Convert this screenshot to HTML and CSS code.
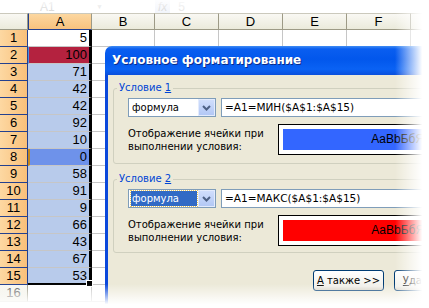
FILE: index.html
```html
<!DOCTYPE html>
<html>

<head>
    <title>Условное форматирование</title>

    <link rel="stylesheet" href="styles.css">
</head>

<body>
    <div class="screen">
        <!-- formula bar, mostly faded out -->
        <div class="formula-bar">
            <div class="name-box">A1</div>
            <span class="name-arrow">&#9660;</span>
            <span class="fx">fx</span>
            <span class="fx-value">5</span>
        </div>

        <div class="sheet">
            <div class="corner"></div>
            <div class="col-head active">A</div>
            <div class="col-head">B</div>
            <div class="col-head">C</div>
            <div class="col-head">D</div>
            <div class="col-head">E</div>
            <div class="col-head">F</div>
            <div class="col-head"></div>

            <div class="row-head sel">1</div><div class="cell a first">5</div><div class="cell"></div><div class="cell"></div><div class="cell"></div><div class="cell"></div><div class="cell"></div><div class="cell"></div>
            <div class="row-head sel">2</div><div class="cell a max">100</div><div class="cell"></div><div class="cell"></div><div class="cell"></div><div class="cell"></div><div class="cell"></div><div class="cell"></div>
            <div class="row-head sel">3</div><div class="cell a">71</div><div class="cell"></div><div class="cell"></div><div class="cell"></div><div class="cell"></div><div class="cell"></div><div class="cell"></div>
            <div class="row-head sel">4</div><div class="cell a">42</div><div class="cell"></div><div class="cell"></div><div class="cell"></div><div class="cell"></div><div class="cell"></div><div class="cell"></div>
            <div class="row-head sel">5</div><div class="cell a">42</div><div class="cell"></div><div class="cell"></div><div class="cell"></div><div class="cell"></div><div class="cell"></div><div class="cell"></div>
            <div class="row-head sel">6</div><div class="cell a">92</div><div class="cell"></div><div class="cell"></div><div class="cell"></div><div class="cell"></div><div class="cell"></div><div class="cell"></div>
            <div class="row-head sel">7</div><div class="cell a">10</div><div class="cell"></div><div class="cell"></div><div class="cell"></div><div class="cell"></div><div class="cell"></div><div class="cell"></div>
            <div class="row-head sel">8</div><div class="cell a min">0</div><div class="cell"></div><div class="cell"></div><div class="cell"></div><div class="cell"></div><div class="cell"></div><div class="cell"></div>
            <div class="row-head sel">9</div><div class="cell a">58</div><div class="cell"></div><div class="cell"></div><div class="cell"></div><div class="cell"></div><div class="cell"></div><div class="cell"></div>
            <div class="row-head sel">10</div><div class="cell a">91</div><div class="cell"></div><div class="cell"></div><div class="cell"></div><div class="cell"></div><div class="cell"></div><div class="cell"></div>
            <div class="row-head sel">11</div><div class="cell a">9</div><div class="cell"></div><div class="cell"></div><div class="cell"></div><div class="cell"></div><div class="cell"></div><div class="cell"></div>
            <div class="row-head sel">12</div><div class="cell a">66</div><div class="cell"></div><div class="cell"></div><div class="cell"></div><div class="cell"></div><div class="cell"></div><div class="cell"></div>
            <div class="row-head sel">13</div><div class="cell a">43</div><div class="cell"></div><div class="cell"></div><div class="cell"></div><div class="cell"></div><div class="cell"></div><div class="cell"></div>
            <div class="row-head sel">14</div><div class="cell a">67</div><div class="cell"></div><div class="cell"></div><div class="cell"></div><div class="cell"></div><div class="cell"></div><div class="cell"></div>
            <div class="row-head sel">15</div><div class="cell a last">53<span class="fill-handle"></span></div><div class="cell"></div><div class="cell"></div><div class="cell"></div><div class="cell"></div><div class="cell"></div><div class="cell"></div>
            <div class="row-head">16</div><div class="cell"></div><div class="cell"></div><div class="cell"></div><div class="cell"></div><div class="cell"></div><div class="cell"></div><div class="cell"></div>
        </div>

        <div class="dialog">
            <div class="title-bar">Условное форматирование</div>
            <div class="dialog-body">

                <div class="group">
                    <span class="group-title">Условие <u>1</u></span>
                    <div class="cond-row">
                        <div class="combo">
                            <span class="combo-text">формула</span>
                            <span class="combo-btn">
                                <svg width="9" height="6" viewBox="0 0 9 6"><path d="M1 1 L4.5 4.5 L8 1" fill="none" stroke="#4d6185" stroke-width="2"/></svg>
                            </span>
                        </div>
                        <div class="formula">=А1=МИН($А$1:$А$15)</div>
                    </div>
                    <div class="format-row">
                        <div class="format-label">Отображение ячейки при выполнении условия:</div>
                        <div class="preview">
                            <div class="preview-fill blue">AaBbБбЯя</div>
                        </div>
                    </div>
                </div>

                <div class="group second">
                    <span class="group-title">Условие <u>2</u></span>
                    <div class="cond-row">
                        <div class="combo">
                            <span class="combo-text focused">формула</span>
                            <span class="combo-btn">
                                <svg width="9" height="6" viewBox="0 0 9 6"><path d="M1 1 L4.5 4.5 L8 1" fill="none" stroke="#4d6185" stroke-width="2"/></svg>
                            </span>
                        </div>
                        <div class="formula">=А1=МАКС($А$1:$А$15)</div>
                    </div>
                    <div class="format-row">
                        <div class="format-label">Отображение ячейки при выполнении условия:</div>
                        <div class="preview">
                            <div class="preview-fill red">AaBbБбЯя</div>
                        </div>
                    </div>
                </div>

                <div class="buttons">
                    <button class="btn"><u>А</u> также &gt;&gt;</button>
                    <button class="btn"><u>У</u>далить...</button>
                    <button class="btn">ОК</button>
                </div>
            </div>
        </div>

        <!-- soft white fades round the edges of the picture -->
        <div class="fade-top"></div>
        <div class="fade-right"></div>
        <div class="fade-bottom"></div>
    </div>
</body>

</html>
```

FILE: styles.css
```css
body {
    margin: 0;
    padding: 0;
    background-color: #fff;
    font-family: "Liberation Sans", Arial, sans-serif;
}

.screen {
    position: relative;
    width: 429px;
    height: 308px;
    overflow: hidden;
    background-color: #fff;
}

/* formula bar */
.formula-bar {
    height: 13px;
    display: flex;
    align-items: center;
    font-size: 12px;
    color: #d2d2d2;
}

.name-box {
    width: 92px;
    padding-left: 40px;
    box-sizing: border-box;
}

.name-arrow {
    font-size: 7px;
    color: #e0e0e0;
    margin-left: 4px;
}

.fx {
    margin-left: 52px;
    padding: 0 3px;
    font-style: italic;
    background-color: #f1f4fb;
}

.fx-value {
    margin-left: 8px;
    color: #e2e2e2;
}

/* sheet grid */
.sheet {
    display: grid;
    grid-template-columns: 28px 64px 63px 64px 64px 64px 64px 64px;
    grid-auto-rows: 17px;
    font-size: 13px;
    color: #000;
}

.corner,
.col-head {
    box-sizing: border-box;
    background: linear-gradient(#f9f8f3, #ebeadb);
    border-top: 1px solid #c9c7ba;
    border-right: 1px solid #9d9a86;
    border-bottom: 1px solid #9d9a86;
    text-align: center;
    line-height: 15px;
}

.col-head.active {
    background: linear-gradient(#fcd7a0, #f8c27e);
    border-left: 1px solid #23408f;
    border-bottom: 1px solid #23408f;
}

.row-head {
    box-sizing: border-box;
    background: linear-gradient(#f9f8f3, #ebeadb);
    border-right: 1px solid #9d9a86;
    border-bottom: 1px solid #c9c7ba;
    text-align: center;
    line-height: 16px;
    color: #555;
}

.row-head.sel {
    background: linear-gradient(to right, #fdd8a2, #f9c07a);
    border-right: 1px solid #23408f;
    border-bottom: 1px solid #23408f;
    color: #000;
}

.cell {
    box-sizing: border-box;
    border-right: 1px solid #c6c6c6;
    border-bottom: 1px solid #c6c6c6;
}

.cell.a {
    position: relative;
    background-color: #b8cbeb;
    border-right: 3px solid #000;
    text-align: right;
    padding-right: 2px;
    line-height: 16px;
}

.cell.first {
    background-color: #fff;
}

.cell.max {
    background-color: #b4223f;
    border-left: 1px solid #4a8fe0;
}

.cell.min {
    background-color: #6e92ea;
    border-left: 2px solid #c2861f;
}

.cell.last {
    border-bottom: 2px solid #000;
}

.fill-handle {
    position: absolute;
    right: -4px;
    bottom: -4px;
    width: 5px;
    height: 5px;
    background-color: #000;
    border: 1px solid #fff;
}

/* dialog window */
.dialog {
    position: absolute;
    left: 105px;
    top: 46px;
    width: 520px;
    font-family: "DejaVu Sans", Tahoma, sans-serif;
    font-size: 10px;
    color: #000;
}

.title-bar {
    height: 29px;
    line-height: 29px;
    padding-left: 7px;
    border-radius: 7px 7px 0 0;
    background: linear-gradient(#3f8cf3 0, #0a5ef0 3px, #0257ec 45%, #0a62f4 80%, #0a4fdc 100%);
    color: #fff;
    font-weight: bold;
    font-size: 12px;
    text-shadow: 1px 1px #0b2b8a;
}

.dialog-body {
    background-color: #ece9d8;
    border-left: 3px solid #0a48db;
    padding: 13px 0 40px 5px;
}

.group {
    position: relative;
    width: 470px;
    border: 1px solid #d0d0bf;
    border-radius: 3px;
    padding: 9px 14px 8px;
}

.group.second {
    margin-top: 15px;
    padding-bottom: 6px;
}

.group-title {
    position: absolute;
    top: -8px;
    left: 3px;
    padding: 0 2px;
    background-color: #ece9d8;
    color: #0046d5;
    line-height: 14px;
}

.cond-row {
    display: flex;
    align-items: center;
    gap: 5px;
}

.combo {
    width: 88px;
    height: 19px;
    box-sizing: border-box;
    display: flex;
    border: 1px solid #7f9db9;
    background-color: #fff;
}

.combo-text {
    flex: 1;
    margin: 1px 1px 1px 2px;
    padding-left: 1px;
    line-height: 15px;
}

.combo-text.focused {
    background-color: #316ac5;
    color: #fff;
    outline: 1px dotted #e8c45a;
}

.combo-btn {
    width: 17px;
    display: flex;
    align-items: center;
    justify-content: center;
    background: linear-gradient(#d0defc, #b3c8f5);
    border: 1px solid #e3ebfd;
    box-sizing: border-box;
}

.formula {
    width: 270px;
    height: 19px;
    box-sizing: border-box;
    border: 1px solid #7f9db9;
    background-color: #fff;
    padding-left: 3px;
    line-height: 17px;
    font-size: 10.5px;
}

.format-row {
    display: flex;
    align-items: center;
    margin-top: 7px;
}

.format-label {
    width: 150px;
    line-height: 13px;
}

.preview {
    width: 246px;
    height: 31px;
    box-sizing: border-box;
    border: 1px solid #000;
    background-color: #fff;
    padding: 4px;
}

.preview-fill {
    height: 100%;
    text-align: center;
    line-height: 21px;
    font-family: "Liberation Sans", Arial, sans-serif;
    font-size: 12px;
}

.preview-fill.blue {
    background-color: #3366ff;
}

.preview-fill.red {
    background-color: #ff0000;
}

.buttons {
    display: flex;
    gap: 10px;
    margin-top: 17px;
    padding-left: 200px;
}

.btn {
    width: 71px;
    height: 21px;
    padding: 0;
    border: 1px solid #003c74;
    border-radius: 3px;
    background: linear-gradient(#fff, #f1f0ea 80%, #d8d3c6);
    font-family: "DejaVu Sans", Tahoma, sans-serif;
    font-size: 10px;
    color: #000;
}

/* edge fades */
.fade-top {
    position: absolute;
    left: 0;
    top: 0;
    width: 100%;
    height: 14px;
    background: linear-gradient(rgba(255, 255, 255, 0.85), rgba(255, 255, 255, 0));
}

.fade-right {
    position: absolute;
    top: 0;
    right: 0;
    width: 34px;
    height: 100%;
    background: linear-gradient(to right, rgba(255, 255, 255, 0), #fff 80%);
}

.fade-bottom {
    position: absolute;
    left: 0;
    bottom: 0;
    width: 100%;
    height: 24px;
    background: linear-gradient(rgba(255, 255, 255, 0), #fff 85%);
}
```
